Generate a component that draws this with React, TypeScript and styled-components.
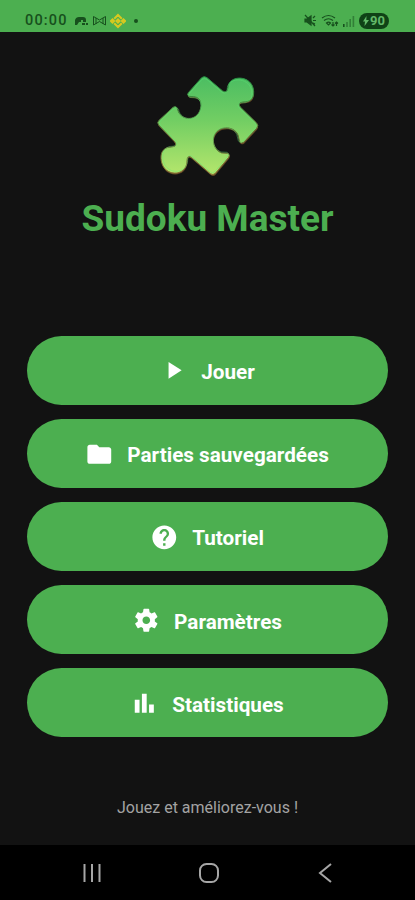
import React from "react";
import styled, { createGlobalStyle } from "styled-components";

const GlobalStyle = createGlobalStyle`
  * { box-sizing: border-box; }
  html, body { margin: 0; background: #111; }
  body { font-family: Roboto, "Noto Sans", sans-serif; }
`;

const Screen = styled.div`
  width: 415px;
  height: 900px;
  display: flex;
  flex-direction: column;
  background: #121212;
  overflow: hidden;
`;

const StatusBar = styled.header`
  height: 32px;
  flex: none;
  display: flex;
  justify-content: space-between;
  padding: 9px 26px 0 25px;
  background: #4caf50;
  color: #17501d;
`;

const StatusGroup = styled.div<{ $gap: number }>`
  display: flex;
  align-items: center;
  height: 23px;
  gap: ${(p) => p.$gap}px;
  svg { display: block; flex: none; }
`;

const Clock = styled.span`
  font-size: 14.5px;
  font-weight: 500;
  line-height: 23px;
  letter-spacing: 1.15px;
  width: 46px;
  white-space: nowrap;
`;

const Dot = styled.span`
  width: 4px;
  height: 4px;
  margin-left: 5px;
  border-radius: 50%;
  background: #17501d;
`;

const Battery = styled.span`
  display: flex;
  align-items: center;
  justify-content: center;
  gap: 1px;
  width: 30px;
  height: 16px;
  border-radius: 8px;
  background: #0f4216;
  color: #62b968;
  font-size: 13px;
  font-weight: 700;
`;

const Content = styled.main`
  flex: 1;
  display: flex;
  flex-direction: column;
  align-items: center;
  padding-top: 33px;
`;

const Logo = styled.svg`
  display: block;
  width: 125px;
  height: 120px;
`;

const Title = styled.h1`
  margin: 10px 0 0;
  height: 48px;
  line-height: 48px;
  font-size: 37px;
  font-weight: 700;
  color: #4caf50;
  white-space: nowrap;
`;

const Menu = styled.nav`
  display: flex;
  flex-direction: column;
  gap: 13.6px;
  width: 361px;
  margin-top: 92.5px;
`;

const MenuButton = styled.button`
  display: flex;
  align-items: center;
  justify-content: center;
  gap: 13.5px;
  height: 69.5px;
  padding: 1px 1px 0 0;
  border: 0;
  border-radius: 35px;
  background: #4caf50;
  color: #fff;
  font: 700 20.7px/28px Roboto, sans-serif;
`;

const MenuIcon = styled.svg`
  display: block;
  width: 28.6px;
  height: 28.6px;
  fill: currentColor;
`;

const Label = styled.span`
  padding-top: 3px;
  white-space: nowrap;
`;

const Tagline = styled.p`
  margin: 59.5px 0 0;
  font-size: 16px;
  line-height: 22px;
  color: #a3a3a3;
`;

const NavigationBar = styled.footer`
  height: 55px;
  flex: none;
  display: flex;
  align-items: center;
  justify-content: space-between;
  padding: 0 79px 0 81px;
  background: #000;
  svg { display: block; }
`;

const entries = [
  { label: "Jouer", path: "M8 5v14l11-7z" },
  {
    label: "Parties sauvegardées",
    path: "M10 4H4c-1.1 0-1.99.9-1.99 2L2 18c0 1.1.9 2 2 2h16c1.1 0 2-.9 2-2V8c0-1.1-.9-2-2-2h-8l-2-2z",
  },
  {
    label: "Tutoriel",
    path: "M12 2C6.48 2 2 6.48 2 12s4.48 10 10 10 10-4.48 10-10S17.52 2 12 2zm1 17h-2v-2h2v2zm2.07-7.75l-.9.92C13.45 12.9 13 13.5 13 15h-2v-.5c0-1.1.45-2.1 1.17-2.83l1.24-1.26c.37-.36.59-.86.59-1.41 0-1.1-.9-2-2-2s-2 .9-2 2H8c0-2.21 1.79-4 4-4s4 1.79 4 4c0 .88-.36 1.68-.93 2.25z",
  },
  {
    label: "Paramètres",
    path: "M19.14 12.94c.04-.3.06-.61.06-.94 0-.32-.02-.64-.07-.94l2.03-1.58c.18-.14.23-.41.12-.61l-1.92-3.32c-.12-.22-.37-.29-.59-.22l-2.39.96c-.5-.38-1.03-.7-1.62-.94l-.36-2.54c-.04-.24-.24-.41-.48-.41h-3.84c-.24 0-.43.17-.47.41l-.36 2.54c-.59.24-1.13.57-1.62.94l-2.39-.96c-.22-.08-.47 0-.59.22L2.74 8.87c-.12.21-.08.47.12.61l2.03 1.58c-.05.3-.09.63-.09.94s.02.64.07.94l-2.03 1.58c-.18.14-.23.41-.12.61l1.92 3.32c.12.22.37.29.59.22l2.39-.96c.5.38 1.03.7 1.62.94l.36 2.54c.05.24.24.41.48.41h3.84c.24 0 .44-.17.47-.41l.36-2.54c.59-.24 1.13-.56 1.62-.94l2.39.96c.22.08.47 0 .59-.22l1.92-3.32c.12-.22.07-.47-.12-.61l-2.01-1.58zM12 15.2c-1.77 0-3.2-1.43-3.2-3.2s1.43-3.2 3.2-3.2 3.2 1.43 3.2 3.2-1.43 3.2-3.2 3.2z",
  },
  { label: "Statistiques", path: "M4 9h4v11H4zM16 13h4v7h-4zM10 4h4v16h-4z" },
];

const PIECE =
  "M170 38 Q178 32 186 38 L233 78 Q247 86 249 68 C250 28 324 28 326 80 C327 103 313 111 294 111 Q276 113 286 126 L335 174 Q342 182 335 190 L296 232 Q288 237 284 230 L279 210 C268 181 215 179 206 218 C202 240 214 258 230 264 L249 265 Q256 270 251 277 L211 325 Q204 332 196 326 L140 278 Q127 268 126 286 C127 337 51 339 48 280 C47 260 57 246 80 246 Q99 244 89 230 L41 180 Q35 172 42 166 L84 127 Q92 121 97 130 C105 173 164 170 168 122 C168 103 158 96 146 95 L133 94 Q124 91 130 83 Z";

const PuzzleLogo = () => (
  <Logo viewBox="0 0 375 360">
    <defs>
      <linearGradient id="piece" x1="0" y1="0" x2="0" y2="1">
        <stop offset="0" stopColor="#4bbd62" />
        <stop offset="0.45" stopColor="#72ce63" />
        <stop offset="1" stopColor="#b5e66c" />
      </linearGradient>
      <linearGradient id="edge" x1="0" y1="0" x2="0" y2="1">
        <stop offset="0" stopColor="#259444" />
        <stop offset="0.5" stopColor="#5b7437" />
        <stop offset="1" stopColor="#8b7436" />
      </linearGradient>
      <filter id="soft" x="-5%" y="-5%" width="110%" height="110%">
        <feGaussianBlur stdDeviation="2" />
      </filter>
    </defs>
    <path d={PIECE} fill="#654825" transform="translate(1 4)" filter="url(#soft)" />
    <path d={PIECE} fill="url(#piece)" stroke="url(#edge)" strokeWidth="3" />
    <path d={PIECE} fill="none" stroke="#5ce779" strokeWidth="3" opacity="0.4" transform="translate(7 7) scale(.962)" filter="url(#soft)" />
  </Logo>
);

const GameIcon = () => (
  <svg width="15" height="12" viewBox="0 0 15 12" fill="currentColor">
    <path d="M1 10V5q1-3 4-3h4q3 0 3 3v2H9V5H7v2H5L3 10zM8 8h3v2H8zM12 8h2v2h-2z" />
  </svg>
);

const BowIcon = () => (
  <svg width="15" height="12" viewBox="0 0 15 12" fill="none" stroke="currentColor">
    <path d="M1.5 10V1.5L7.5 5l6-3.5V10l-6-3.5zM4 3v6M11 3v6" />
  </svg>
);

const DiamondIcon = () => (
  <svg width="16" height="16" viewBox="0 0 16 16" fill="none" stroke="#d8c91f" strokeWidth="2">
    <path d="M4.2 5.8 8 2l3.8 3.8M4.2 10.2 8 14l3.8-3.8M1 8l1.5-1.5L4 8 2.5 9.5zM12 8l1.5-1.5L15 8l-1.5 1.5zM8 6.5 9.5 8 8 9.5 6.5 8z" />
  </svg>
);

const MuteIcon = () => (
  <svg width="13" height="13" viewBox="0 0 13 13" fill="none" stroke="currentColor" strokeWidth="1.2">
    <path d="M1 5h2l4-3v9L3 8H1z" fill="currentColor" />
    <path d="m1 1 10 11M9 4l2-2M9 6.5h3M9 9l2 1" />
  </svg>
);

const WifiIcon = () => (
  <svg width="18" height="14" viewBox="0 0 18 14" fill="none" stroke="currentColor" strokeWidth="1.2">
    <path d="M1 4q6.5-5 13 0M3 6.5q4.5-3.5 9 0M5.5 9q2-1.8 4 0L7.5 11zM12 8v4M10.5 10.5 12 12l1.5-1.5M15.5 12V8M14 9.5 15.5 8 17 9.5" />
  </svg>
);

const SignalIcon = () => (
  <svg width="12" height="12" viewBox="0 0 12 12" fill="currentColor">
    <path d="M0 9h1.6v3H0z" />
    <path d="M3.2 7h1.6v5H3.2zM6.4 4H8v8H6.4zM9.6 1h1.6v11H9.6z" opacity="0.5" />
  </svg>
);

export default function App() {
  return (
    <>
      <GlobalStyle />
      <Screen>
        <StatusBar>
          <StatusGroup $gap={3}>
            <Clock>00:00</Clock>
            <GameIcon />
            <BowIcon />
            <DiamondIcon />
            <Dot />
          </StatusGroup>
          <StatusGroup $gap={4}>
            <MuteIcon />
            <WifiIcon />
            <SignalIcon />
            <Battery>
              <svg width="6" height="10" viewBox="0 0 6 10" fill="currentColor">
                <path d="M3.5 0 0 5.5h2L1.5 10 6 4H3.3z" />
              </svg>
              90
            </Battery>
          </StatusGroup>
        </StatusBar>
        <Content>
          <PuzzleLogo />
          <Title>Sudoku Master</Title>
          <Menu>
            {entries.map((entry) => (
              <MenuButton key={entry.label}>
                <MenuIcon viewBox="0 0 24 24">
                  <path d={entry.path} />
                </MenuIcon>
                <Label>{entry.label}</Label>
              </MenuButton>
            ))}
          </Menu>
          <Tagline>Jouez et améliorez-vous !</Tagline>
        </Content>
        <NavigationBar>
          <svg width="22" height="22" viewBox="0 0 22 22" stroke="#a6a6a6" strokeWidth="2">
            <path d="M3.5 2v18M11 2v18M18.5 2v18" />
          </svg>
          <svg width="22" height="22" viewBox="0 0 22 22" fill="none" stroke="#a6a6a6" strokeWidth="2">
            <rect x="2" y="2" width="18" height="18" rx="6.5" />
          </svg>
          <svg width="22" height="22" viewBox="0 0 22 22" fill="none" stroke="#a6a6a6" strokeWidth="2">
            <path d="M17 2 6 11l11 9" />
          </svg>
        </NavigationBar>
      </Screen>
    </>
  );
}
